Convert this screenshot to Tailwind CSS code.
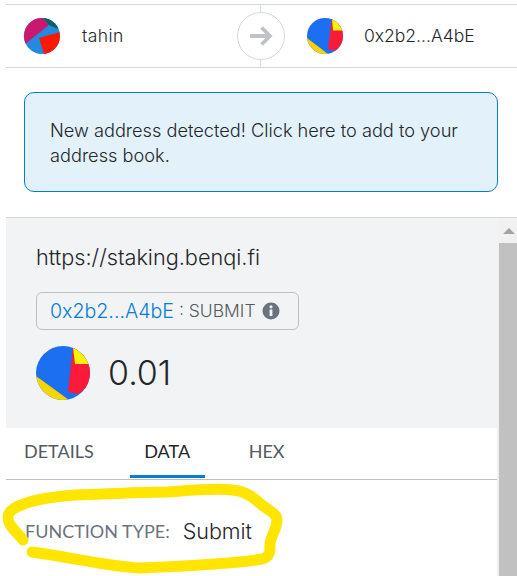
<!DOCTYPE html>
<html>
<head>
<meta charset="utf-8">
<script src="https://cdn.jsdelivr.net/npm/@tailwindcss/browser@4"></script>
</head>
<body class="bg-white">
<div class="relative w-[517px] h-[576px] overflow-hidden bg-white font-['Lato',sans-serif] text-[#24272a]">
  <div class="pl-[6px] pt-[4px]">
    <div class="relative flex items-center h-[64px] border-y border-[#d6d9dc]">
      <div class="flex items-center w-[249px] pl-[18px]">
        <svg width="36" height="36" viewBox="0 0 36 36" class="shrink-0"><defs><clipPath id="c1"><circle cx="18" cy="18" r="18"/></clipPath></defs><g clip-path="url(#c1)"><rect width="36" height="36" fill="#2489e0"/><path d="M0 0H19L25 7 0 27Z" fill="#c8186f"/><path d="M19 0L25 7 34 11 36 0Z" fill="#03635d"/><path d="M15 20L36 14V36H20Z" fill="#fb1a00"/></g></svg>
        <span class="ml-[22px] text-[17.5px] tracking-[0.4px] font-['Inter',sans-serif] font-light">tahin</span>
      </div>
      <div class="relative z-10 flex items-center justify-center w-[48px] h-[48px] rounded-full border border-[#d6d9dc] bg-white shrink-0 -ml-[18px]">
        <svg width="24" height="24" viewBox="0 0 24 24" fill="none" stroke="#bfc3c8" stroke-width="3.8" stroke-linejoin="miter"><path d="M1 12H21M12.5 3.5L21 12L12.5 20.5"/></svg>
      </div>
      <div class="flex items-center ml-[22px]">
        <svg width="36" height="36" viewBox="0 0 36 36" class="shrink-0"><defs><clipPath id="c2"><circle cx="18" cy="18" r="18"/></clipPath></defs><g clip-path="url(#c2)"><rect width="36" height="36" fill="#1b6ff0"/><path d="M0 20L21 36H0Z" fill="#f5d400"/><path d="M25 0L21 31 29 33 36 28V0Z" fill="#fb1a37"/><path d="M25 0L26 12.5 36 12.5V0Z" fill="#f5f500"/></g></svg>
        <span class="ml-[21px] text-[17.5px] font-['Inter',sans-serif] font-light">0x2b2...A4bE</span>
      </div>
      <div class="absolute left-[254px] top-0 h-full w-px bg-[#d6d9dc]"></div>
    </div>
    <div class="ml-[18px] mr-[19px] mt-[24px] h-[100px] rounded-[10px] border border-[#037dd6] bg-[#e3f1fb] pl-[25px] pr-[20px] pt-[25px] text-[18.2px] leading-[25px] font-['Inter',sans-serif] font-light">New address detected! Click here to add to your address book.</div>
    <div class="relative mt-[25px] w-[511px] h-[360px] flex border-t border-[#d6d9dc]">
      <div class="w-[491px]">
        <div class="h-[210px] bg-[#f2f3f4] pl-[30px] pt-[24px]">
          <div class="text-[21.7px] leading-[30px] font-['Inter',sans-serif] font-light">https://staking.benqi.fi</div>
          <div class="mt-[20px] flex items-center w-[263px] h-[38px] rounded-[6px] border border-[#bbc0c5] pl-[13px] text-[19.6px] font-['Inter',sans-serif] font-light">
            <span class="mt-[2px] text-[#037dd6]">0x2b2...A4bE</span>
            <span class="ml-[5px] text-[#535a61] text-[17.5px]">: SUBMIT</span>
            <svg width="18" height="18" viewBox="0 0 18 18" class="ml-[6px]"><circle cx="9" cy="9" r="8.5" fill="#6a737d"/><rect x="7.6" y="7.5" width="2.8" height="6.5" fill="#f2f3f4"/><circle cx="9" cy="4.8" r="1.6" fill="#f2f3f4"/></svg>
          </div>
          <div class="mt-[16px] flex items-center">
            <svg width="54" height="54" viewBox="0 0 54 54" class="shrink-0"><defs><clipPath id="c3"><circle cx="27" cy="27" r="27"/></clipPath></defs><g clip-path="url(#c3)"><rect width="54" height="54" fill="#1b6ff0"/><path d="M0 30L33 54H0Z" fill="#f5d400"/><path d="M37 0L32 46 42 48 54 39V0Z" fill="#fb1a37"/><path d="M37 1L39 18H54V0Z" fill="#f5f500"/></g></svg>
            <span class="ml-[18px] text-[34px] leading-[54px] font-['Inter',sans-serif] font-light">0.01</span>
          </div>
        </div>
        <div class="relative flex h-[52px] border-b border-[#bbc0c5] text-[18px] text-[#535a61]">
          <div class="ml-[18px] pt-[10px]">DETAILS</div>
          <div class="ml-[36px] w-[75px] h-[50px] border-b-[3px] border-[#037dd6] pt-[10px] text-center text-[#24272a]">DATA</div>
          <div class="ml-[44px] pt-[10px]">HEX</div>
        </div>
        <div class="flex items-center pl-[19px] pt-[39px] leading-[24px]">
          <span class="text-[18px] text-[#6a737d]">FUNCTION TYPE:</span>
          <span class="ml-[13px] text-[21.5px] font-['Inter',sans-serif] font-light">Submit</span>
        </div>
      </div>
      <div class="w-[20px] bg-[#f1f1f1] flex flex-col items-center">
        <div class="h-[25px] w-full flex items-center justify-end pr-[2px]">
          <div class="w-0 h-0 border-x-[6px] border-x-transparent border-b-[6px] border-b-[#a3a3a3]"></div>
        </div>
        <div class="w-[18px] ml-[2px] flex-1 bg-[#c1c1c1]"></div>
      </div>
    </div>
  </div>
  <svg class="absolute left-0 top-0 pointer-events-none" width="517" height="576" viewBox="0 0 517 576" fill="none"><path d="M23 540C17 532 8 526 8 518C8 510 16 507 24 504C36 499 50 497 75 495C110 494 140 492 167 492C195 490 215 488 233 490C245 491 253 497 262 505C270 511 277 514 277 520C277 530 270 536 270 545C270 552 270 557 262 559C240 563 190 566 140 568C105 566 70 557 32 552" stroke="#ffe500" stroke-width="11" stroke-linecap="round" stroke-linejoin="round"/></svg>
</div>
</body>
</html>
